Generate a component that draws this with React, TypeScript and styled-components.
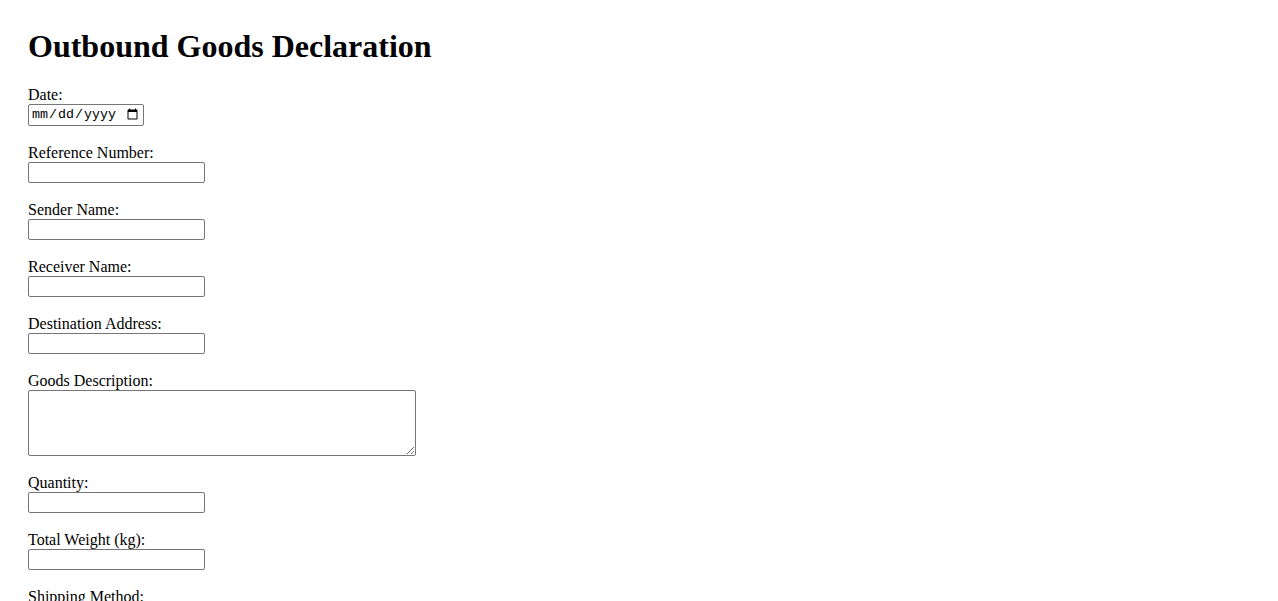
import React from "react";
import styled, { createGlobalStyle } from "styled-components";

const GlobalStyle = createGlobalStyle`
  body {
    margin: 8px;
    font-family: "Liberation Serif", "Times New Roman", serif;
    font-size: 16px;
    color: #000;
    background: #fff;
  }
`;

const Page = styled.div`
  padding: 20px;
`;

const Title = styled.h1`
  font-size: 32px;
  font-weight: bold;
  margin: 0 0 21px;
  line-height: 37px;
`;

const Form = styled.form`
  display: flex;
  flex-direction: column;
  align-items: flex-start;
`;

const Group = styled.div`
  display: flex;
  flex-direction: column;
  align-items: flex-start;
  margin-bottom: 18px;
`;

const Label = styled.label`
  display: block;
  line-height: 18px;
`;

const TextInput = styled.input`
  box-sizing: border-box;
  width: 177px;
  height: 21px;
  margin: 0;
  border: 1px solid #767676;
  border-radius: 2px;
  padding: 1px 2px;
  font-family: "Liberation Sans", Arial, sans-serif;
  font-size: 13.33px;
`;

const DateInput = styled(TextInput)`
  width: 116px;
  height: 22px;
  font-family: "Liberation Mono", monospace;
`;

const TextArea = styled.textarea`
  box-sizing: border-box;
  width: 388px;
  height: 66px;
  margin: 0;
  border: 1px solid #767676;
  border-radius: 2px;
  padding: 2px;
  font-family: "Liberation Mono", monospace;
  font-size: 13.33px;
`;

const Select = styled.select`
  box-sizing: border-box;
  height: 21px;
  margin: 0;
  font-family: "Liberation Sans", Arial, sans-serif;
  font-size: 13.33px;
`;

const textFields = [
  { id: "ref", label: "Reference Number:" },
  { id: "sender", label: "Sender Name:" },
  { id: "receiver", label: "Receiver Name:" },
  { id: "dest", label: "Destination Address:" },
];

export default function App() {
  return (
    <>
      <GlobalStyle />
      <Page>
        <Title>Outbound Goods Declaration</Title>
        <Form onSubmit={(e) => e.preventDefault()}>
          <Group>
            <Label htmlFor="date">Date:</Label>
            <DateInput id="date" type="date" />
          </Group>
          {textFields.map((f) => (
            <Group key={f.id}>
              <Label htmlFor={f.id}>{f.label}</Label>
              <TextInput id={f.id} type="text" />
            </Group>
          ))}
          <Group>
            <Label htmlFor="desc">Goods Description:</Label>
            <TextArea id="desc" />
          </Group>
          <Group>
            <Label htmlFor="qty">Quantity:</Label>
            <TextInput id="qty" type="number" />
          </Group>
          <Group>
            <Label htmlFor="weight">Total Weight (kg):</Label>
            <TextInput id="weight" type="number" />
          </Group>
          <Group>
            <Label htmlFor="method">Shipping Method:</Label>
            <Select id="method">
              <option>Air</option>
              <option>Sea</option>
              <option>Road</option>
            </Select>
          </Group>
        </Form>
      </Page>
    </>
  );
}
